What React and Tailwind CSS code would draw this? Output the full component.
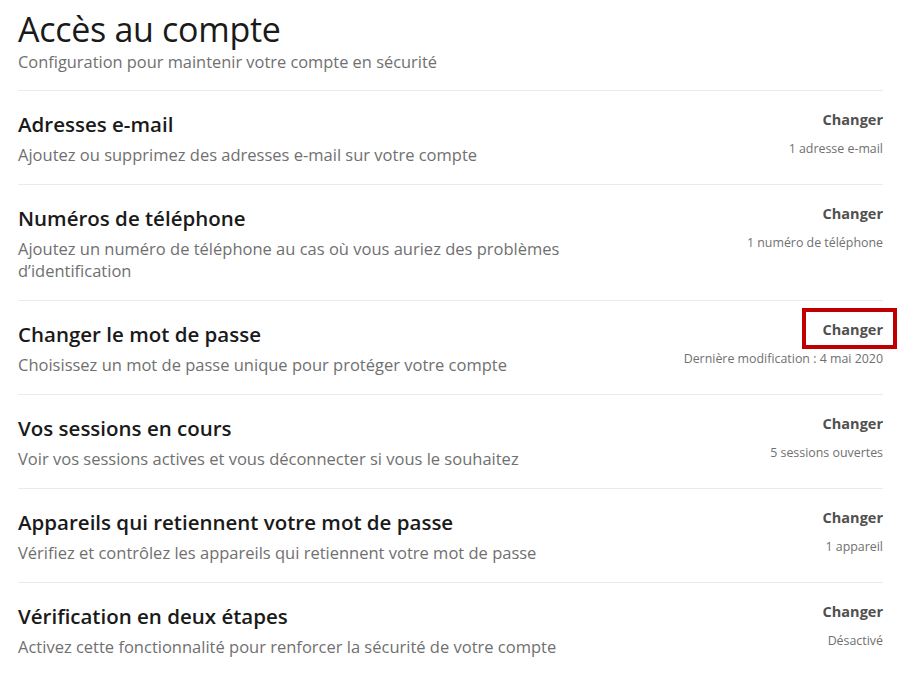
import { useState } from "react";

const itens = [
  {
    titulo: "Adresses e-mail",
    descricao: "Ajoutez ou supprimez des adresses e-mail sur votre compte",
    info: "1 adresse e-mail",
  },
  {
    titulo: "Numéros de téléphone",
    descricao: "Ajoutez un numéro de téléphone au cas où vous auriez des problèmes d’identification",
    info: "1 numéro de téléphone",
  },
  {
    titulo: "Changer le mot de passe",
    descricao: "Choisissez un mot de passe unique pour protéger votre compte",
    info: "Dernière modification : 4 mai 2020",
    destaque: true,
  },
  {
    titulo: "Vos sessions en cours",
    descricao: "Voir vos sessions actives et vous déconnecter si vous le souhaitez",
    info: "5 sessions ouvertes",
  },
  {
    titulo: "Appareils qui retiennent votre mot de passe",
    descricao: "Vérifiez et contrôlez les appareils qui retiennent votre mot de passe",
    info: "1 appareil",
  },
  {
    titulo: "Vérification en deux étapes",
    descricao: "Activez cette fonctionnalité pour renforcer la sécurité de votre compte",
    info: "Désactivé",
  },
];

export default function App() {
  const [aberto, setAberto] = useState(null);

  return (
    <div
      className="min-h-screen bg-white pl-[18px] pr-[26px] pt-[8px]"
      style={{ fontFamily: '"Open Sans", "Noto Sans", sans-serif' }}
    >
      <header className="pb-[17px] border-b border-[#ebebeb]">
        <h1 className="text-[34px] leading-[43px] text-[#1a1a1a] tracking-[-0.3px]">Accès au compte</h1>
        <p className="text-[16.4px] leading-[22px] text-[#707070]">
          Configuration pour maintenir votre compte en sécurité
        </p>
      </header>

      <ul>
        {itens.map((item, idx) => (
          <li
            key={idx}
            className={`flex justify-between pt-[18px] pb-[18px] ${
              idx < itens.length - 1 ? "border-b border-[#ebebeb]" : ""
            }`}
          >
            <div className="max-w-[580px]">
              <h2 className="text-[20.5px] leading-[30px] font-semibold text-[#1a1a1a]">{item.titulo}</h2>
              <p className="text-[16.5px] leading-[22px] text-[#707070] mt-[5px]">{item.descricao}</p>
            </div>
            <div className="flex flex-col items-end -mt-[2px]">
              <div className="relative">
                <button
                  type="button"
                  onClick={() => setAberto(idx)}
                  className="text-[14.5px] leading-[20px] font-bold text-[#505050]"
                >
                  Changer
                </button>
                {item.destaque && (
                  <span className="absolute -left-[21px] -right-[14px] -top-[9px] -bottom-[8px] border-[4px] border-[#c00000] pointer-events-none" />
                )}
              </div>
              <span className="text-[12.4px] leading-[18px] text-[#707070] mt-[9px]">{item.info}</span>
            </div>
          </li>
        ))}
      </ul>
      {aberto !== null && <span className="sr-only">{itens[aberto].titulo}</span>}
    </div>
  );
}
